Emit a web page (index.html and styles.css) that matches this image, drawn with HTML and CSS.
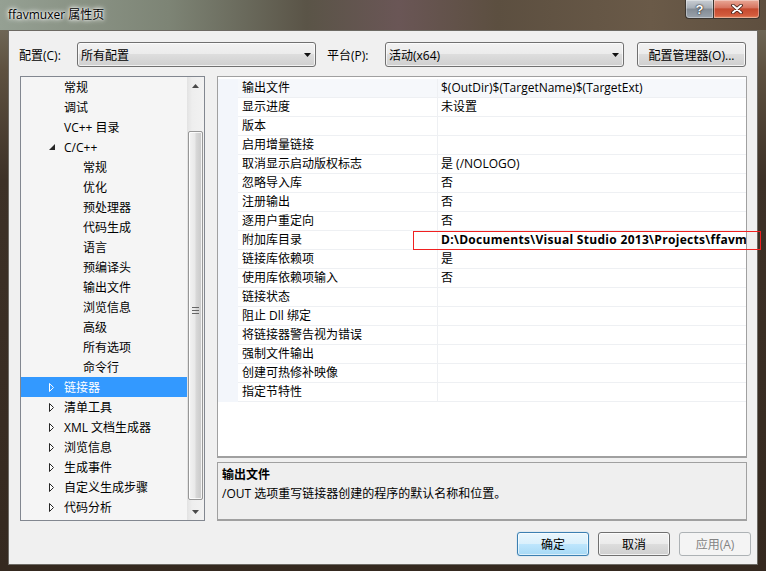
FILE: index.html
```html
<!DOCTYPE html>
<html>
<head>
  <meta charset="utf-8">
  <title>ffavmuxer 属性页</title>
  <link rel="stylesheet" href="styles.css">
</head>
<body>
  <div class="window">

    <!-- Title bar -->
    <div class="titlebar">
      <div class="title">ffavmuxer 属性页</div>
      <div class="caption-btns">
        <div class="cap-btn help-btn">?</div>
        <div class="cap-btn close-btn">
          <svg width="12" height="10" viewBox="0 0 12 10">
            <path d="M2 1.5 L10 8.5 M10 1.5 L2 8.5" stroke="#3a1810" stroke-width="3.6" stroke-linecap="round"/>
            <path d="M2 1.5 L10 8.5 M10 1.5 L2 8.5" stroke="#fff" stroke-width="2" stroke-linecap="round"/>
          </svg>
        </div>
      </div>
    </div>

    <div class="client">

      <!-- Configuration row -->
      <div class="config-row">
        <span class="lbl">配置(C):</span>
        <div class="combo">
          <span>所有配置</span>
          <svg class="combo-arrow" width="7" height="4" viewBox="0 0 7 4"><polygon points="0,0 7,0 3.5,4" fill="#111"/></svg>
        </div>
        <span class="lbl lbl-platform">平台(P):</span>
        <div class="combo">
          <span>活动(x64)</span>
          <svg class="combo-arrow" width="7" height="4" viewBox="0 0 7 4"><polygon points="0,0 7,0 3.5,4" fill="#111"/></svg>
        </div>
        <button class="btn manager-btn">配置管理器(O)...</button>
      </div>

      <div class="main">

        <!-- Tree -->
        <div class="tree">
          <div class="tree-list">
            <div class="node lvl1"><span class="twisty"></span>常规</div>
            <div class="node lvl1"><span class="twisty"></span>调试</div>
            <div class="node lvl1"><span class="twisty"></span>VC++ 目录</div>
            <div class="node lvl1"><span class="twisty"><svg width="6" height="6" viewBox="0 0 6 6"><polygon points="6,0 6,6 0,6" fill="#262626"/></svg></span>C/C++</div>
            <div class="node lvl2"><span class="twisty"></span>常规</div>
            <div class="node lvl2"><span class="twisty"></span>优化</div>
            <div class="node lvl2"><span class="twisty"></span>预处理器</div>
            <div class="node lvl2"><span class="twisty"></span>代码生成</div>
            <div class="node lvl2"><span class="twisty"></span>语言</div>
            <div class="node lvl2"><span class="twisty"></span>预编译头</div>
            <div class="node lvl2"><span class="twisty"></span>输出文件</div>
            <div class="node lvl2"><span class="twisty"></span>浏览信息</div>
            <div class="node lvl2"><span class="twisty"></span>高级</div>
            <div class="node lvl2"><span class="twisty"></span>所有选项</div>
            <div class="node lvl2"><span class="twisty"></span>命令行</div>
            <div class="node lvl1 selected"><span class="twisty"><svg width="6" height="9" viewBox="0 0 6 9"><polygon points="0.5,0.5 4.5,4.5 0.5,8.5" fill="none" stroke="#fff"/></svg></span>链接器</div>
            <div class="node lvl1"><span class="twisty"><svg width="6" height="9" viewBox="0 0 6 9"><polygon points="0.5,0.5 4.5,4.5 0.5,8.5" fill="#fff" stroke="#262626"/></svg></span>清单工具</div>
            <div class="node lvl1"><span class="twisty"><svg width="6" height="9" viewBox="0 0 6 9"><polygon points="0.5,0.5 4.5,4.5 0.5,8.5" fill="#fff" stroke="#262626"/></svg></span>XML 文档生成器</div>
            <div class="node lvl1"><span class="twisty"><svg width="6" height="9" viewBox="0 0 6 9"><polygon points="0.5,0.5 4.5,4.5 0.5,8.5" fill="#fff" stroke="#262626"/></svg></span>浏览信息</div>
            <div class="node lvl1"><span class="twisty"><svg width="6" height="9" viewBox="0 0 6 9"><polygon points="0.5,0.5 4.5,4.5 0.5,8.5" fill="#fff" stroke="#262626"/></svg></span>生成事件</div>
            <div class="node lvl1"><span class="twisty"><svg width="6" height="9" viewBox="0 0 6 9"><polygon points="0.5,0.5 4.5,4.5 0.5,8.5" fill="#fff" stroke="#262626"/></svg></span>自定义生成步骤</div>
            <div class="node lvl1"><span class="twisty"><svg width="6" height="9" viewBox="0 0 6 9"><polygon points="0.5,0.5 4.5,4.5 0.5,8.5" fill="#fff" stroke="#262626"/></svg></span>代码分析</div>
          </div>

          <div class="scrollbar">
            <div class="sb-btn"><svg width="7" height="4" viewBox="0 0 7 4"><polygon points="3.5,0 7,4 0,4" fill="#4a4a4a"/></svg></div>
            <div class="sb-track">
              <div class="sb-gap-top"></div>
              <div class="sb-thumb">
                <svg width="7" height="7" viewBox="0 0 7 7">
                  <path d="M0 0.5 H7 M0 3.5 H7 M0 6.5 H7" stroke="#666" stroke-width="1"/>
                </svg>
              </div>
            </div>
            <div class="sb-btn"><svg width="7" height="4" viewBox="0 0 7 4"><polygon points="0,0 7,0 3.5,4" fill="#4a4a4a"/></svg></div>
          </div>
        </div>

        <!-- Property grid + description -->
        <div class="right">
          <div class="grid">
            <div class="row current"><div class="gutter"></div><div class="name">输出文件</div><div class="value">$(OutDir)$(TargetName)$(TargetExt)</div></div>
            <div class="row"><div class="gutter"></div><div class="name">显示进度</div><div class="value">未设置</div></div>
            <div class="row"><div class="gutter"></div><div class="name">版本</div><div class="value"></div></div>
            <div class="row"><div class="gutter"></div><div class="name">启用增量链接</div><div class="value"></div></div>
            <div class="row"><div class="gutter"></div><div class="name">取消显示启动版权标志</div><div class="value">是 (/NOLOGO)</div></div>
            <div class="row"><div class="gutter"></div><div class="name">忽略导入库</div><div class="value">否</div></div>
            <div class="row"><div class="gutter"></div><div class="name">注册输出</div><div class="value">否</div></div>
            <div class="row"><div class="gutter"></div><div class="name">逐用户重定向</div><div class="value">否</div></div>
            <div class="row"><div class="gutter"></div><div class="name">附加库目录</div><div class="value bold">D:\Documents\Visual Studio 2013\Projects\ffavm</div></div>
            <div class="row"><div class="gutter"></div><div class="name">链接库依赖项</div><div class="value">是</div></div>
            <div class="row"><div class="gutter"></div><div class="name">使用库依赖项输入</div><div class="value">否</div></div>
            <div class="row"><div class="gutter"></div><div class="name">链接状态</div><div class="value"></div></div>
            <div class="row"><div class="gutter"></div><div class="name">阻止 Dll 绑定</div><div class="value"></div></div>
            <div class="row"><div class="gutter"></div><div class="name">将链接器警告视为错误</div><div class="value"></div></div>
            <div class="row"><div class="gutter"></div><div class="name">强制文件输出</div><div class="value"></div></div>
            <div class="row"><div class="gutter"></div><div class="name">创建可热修补映像</div><div class="value"></div></div>
            <div class="row"><div class="gutter"></div><div class="name">指定节特性</div><div class="value"></div></div>
          </div>

          <div class="desc">
            <div class="desc-title">输出文件</div>
            <div class="desc-text">/OUT 选项重写链接器创建的程序的默认名称和位置。</div>
          </div>
        </div>
      </div>

      <!-- Dialog buttons -->
      <div class="buttons">
        <button class="btn default-btn">确定</button>
        <button class="btn">取消</button>
        <button class="btn disabled-btn">应用(A)</button>
      </div>
    </div>

    <!-- red highlight annotation -->
    <div class="red-box"></div>
  </div>
</body>
</html>
```

FILE: styles.css
```css
body {
  margin: 0;
  padding: 0;
  font-family: 'Open Sans', 'Noto Sans CJK SC', sans-serif;
  font-size: 12px;
  color: #000;
  background-color: #3a2e24;
  overflow: hidden;
}

.window {
  position: relative;
  width: 766px;
  height: 571px;
  background: linear-gradient(180deg, #7a7666 0px, #5e5140 70px, #3d3127 180px, #35291f 100%);
}

/* Title bar */
.titlebar {
  height: 30px;
  display: flex;
  justify-content: space-between;
  align-items: flex-start;
  background: linear-gradient(90deg, #95a093 0%, #7d8475 22%, #5a5447 40%, #6a5656 52%, #5c4f40 65%, #6a5a48 85%, #5e4f3f 100%);
}

.title {
  padding: 6px 0 0 8px;
  line-height: 17px;
  text-shadow: 0 0 6px #fff, 0 0 4px #fff, 0 0 2px #fff;
}

.caption-btns {
  display: flex;
  margin-right: 6px;
}

.cap-btn {
  height: 18px;
  display: flex;
  align-items: center;
  justify-content: center;
  border: 1px solid #3b352e;
  border-top: none;
  box-shadow: inset 0 0 0 1px rgba(255,255,255,0.35);
}

.help-btn {
  width: 27px;
  border-radius: 0 0 0 4px;
  border-right: none;
  background: linear-gradient(180deg, #c9ced4 0%, #a6adb5 45%, #838b94 50%, #9aa3ac 100%);
  color: #fff;
  font-family: 'Liberation Sans', sans-serif;
  font-weight: bold;
  font-size: 13px;
  text-shadow: 0 0 2px #222, 0 0 1px #000;
}

.close-btn {
  width: 45px;
  border-radius: 0 0 4px 0;
  background: linear-gradient(180deg, #e9a897 0%, #d77561 42%, #c54a2f 50%, #d25b3d 85%, #e58a60 100%);
}

/* Client area */
.client {
  margin: 0 8px;
  height: 533px;
  background-color: #f0f0f0;
  border: 1px solid #6d6a64;
  padding: 0 10px 0 11px;
  display: flex;
  flex-direction: column;
}

.config-row {
  display: flex;
  align-items: center;
  margin-top: 11px;
  height: 25px;
}

.lbl {
  width: 58px;
  margin-left: -1px;
  padding-left: 0;
}

.lbl-platform {
  margin-left: 11px;
  width: 58px;
}

.combo {
  width: 239px;
  height: 25px;
  box-sizing: border-box;
  border: 1px solid #707070;
  border-radius: 3px;
  background: linear-gradient(180deg, #f2f2f2 0%, #ebebeb 50%, #dddddd 50%, #cfcfcf 100%);
  box-shadow: inset 0 0 0 1px rgba(255,255,255,0.7);
  display: flex;
  align-items: center;
  justify-content: space-between;
  padding: 0 4px 0 3px;
}

.combo-arrow {
  display: block;
}

.btn {
  font-family: 'Open Sans', 'Noto Sans CJK SC', sans-serif;
  font-size: 12px;
  color: #000;
  height: 24px;
  padding: 0;
  border: 1px solid #707070;
  border-radius: 3px;
  background: linear-gradient(180deg, #f2f2f2 0%, #ebebeb 50%, #dddddd 50%, #cfcfcf 100%);
  box-shadow: inset 0 0 0 1px rgba(255,255,255,0.75);
}

.manager-btn {
  margin-left: 13px;
  width: 109px;
  height: 25px;
}

/* Main area */
.main {
  display: flex;
  margin-top: 9px;
  height: 445px;
  gap: 12px;
}

.tree {
  width: 185px;
  box-sizing: border-box;
  border: 1px solid #828790;
  background-color: #f5f5f5;
  display: flex;
}

.tree-list {
  flex: 1;
  overflow: hidden;
}

.node {
  height: 20px;
  display: flex;
  align-items: center;
  white-space: nowrap;
}

.node.lvl1 {
  padding-left: 28px;
}

.node.lvl2 {
  padding-left: 47px;
}

.node.selected {
  background-color: #3399ff;
  color: #fff;
}

.twisty {
  width: 15px;
  display: flex;
  align-items: center;
}

.twisty svg {
  display: block;
}

/* Scrollbar */
.scrollbar {
  width: 17px;
  display: flex;
  flex-direction: column;
  background: linear-gradient(90deg, #e2e2e2 0%, #eeeeee 30%, #f2f2f2 100%);
}

.sb-btn {
  height: 17px;
  display: flex;
  align-items: center;
  justify-content: center;
}

.sb-track {
  flex: 1;
  display: flex;
  flex-direction: column;
}

.sb-gap-top {
  height: 37px;
}

.sb-thumb {
  flex: 1;
  margin: 0 1px 3px 1px;
  border: 1px solid #979797;
  border-radius: 2px;
  background: linear-gradient(90deg, #f3f3f3 0%, #e9e9e9 45%, #d8d8d8 55%, #c8c8c8 100%);
  box-shadow: inset 0 0 0 1px rgba(255,255,255,0.8);
  display: flex;
  align-items: center;
  justify-content: center;
  padding-bottom: 10px;
}

/* Property grid */
.right {
  width: 530px;
  display: flex;
  flex-direction: column;
  gap: 4px;
}

.grid {
  height: 382px;
  box-sizing: border-box;
  border: 1px solid #a0a0a0;
  border-bottom-width: 2px;
  background-color: #fff;
  padding-top: 2px;
  overflow: hidden;
}

.row {
  display: grid;
  grid-template-columns: 20px 200px 1fr;
  height: 19px;
}

.gutter {
  background-color: #f3f6fb;
}

.name, .value {
  border-bottom: 1px solid #eef0f3;
  line-height: 18px;
  white-space: nowrap;
  overflow: hidden;
}

.name {
  padding-left: 4px;
  border-right: 1px solid #eef0f3;
}

.value {
  padding-left: 3px;
}

.row.current .name, .row.current .value {
  background-color: #f6f8fb;
}

.value.bold {
  font-weight: bold;
  letter-spacing: 0.3px;
}

/* Description */
.desc {
  height: 59px;
  box-sizing: border-box;
  border: 1px solid #a0a0a0;
  border-bottom-width: 2px;
  background-color: #efefef;
  padding: 2px 4px;
  line-height: 19px;
}

.desc-title {
  font-weight: bold;
}

/* Dialog buttons */
.buttons {
  display: flex;
  justify-content: flex-end;
  gap: 9px;
  margin-top: 11px;
  margin-right: -4px;
}

.buttons .btn {
  width: 72px;
}

.default-btn {
  border-color: #3c7fb1;
  background: linear-gradient(180deg, #eaf6fd 0%, #d9f0fc 50%, #bee6fd 50%, #a7d9f5 100%);
  box-shadow: inset 0 0 0 1px rgba(255,255,255,0.6), 0 0 1px #6cb8e8;
}

.disabled-btn {
  border-color: #adb2b5;
  background: #f4f4f4;
  color: #838383;
  box-shadow: none;
}

/* Red annotation rectangle */
.red-box {
  position: absolute;
  left: 413px;
  top: 231px;
  width: 346px;
  height: 17px;
  border: 1px solid #f02020;
}
```
